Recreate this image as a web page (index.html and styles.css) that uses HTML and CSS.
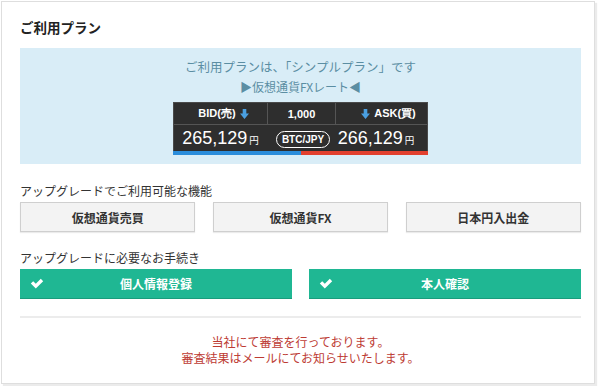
FILE: index.html
```html
<!DOCTYPE html>
<html lang="ja">
<head>
<meta charset="utf-8">
<link rel="stylesheet" href="styles.css">
</head>
<body>
<div class="card">
  <h2 class="title">ご利用プラン</h2>
  <div class="plan-box">
    <p class="plan-text">ご利用プランは、「シンプルプラン」です</p>
    <p class="plan-sub">▶仮想通貨FXレート◀</p>
    <div class="rate">
      <div class="rate-head">
        <div class="cell">BID(売)<svg class="arrow" viewBox="0 0 10 11" width="9" height="10"><path d="M3 0h4v5h3L5 11 0 5h3z" fill="#4a9fe0"/></svg></div>
        <div class="cell">1,000</div>
        <div class="cell"><svg class="arrow" viewBox="0 0 10 11" width="9" height="10"><path d="M3 0h4v5h3L5 11 0 5h3z" fill="#4a9fe0"/></svg>ASK(買)</div>
      </div>
      <div class="rate-body">
        <div class="val">265,129<span class="yen">円</span></div>
        <div class="mid"><span class="pill">BTC/JPY</span></div>
        <div class="val val-ask">266,129<span class="yen">円</span></div>
      </div>
      <div class="rate-bar"><span class="bar-bid"></span><span class="bar-ask"></span></div>
    </div>
  </div>

  <p class="label label-first">アップグレードでご利用可能な機能</p>
  <div class="features">
    <div class="feature">仮想通貨売買</div>
    <div class="feature">仮想通貨FX</div>
    <div class="feature">日本円入出金</div>
  </div>

  <p class="label">アップグレードに必要なお手続き</p>
  <div class="steps">
    <div class="step"><svg class="check" viewBox="0 0 14 11" width="14" height="11"><path d="M0.8 5.6l2.4-2.4 2.6 2.6L10.8 0.8 13.2 3.2 5.8 10.6z" fill="#fff"/></svg>個人情報登録</div>
    <div class="step"><svg class="check" viewBox="0 0 14 11" width="14" height="11"><path d="M0.8 5.6l2.4-2.4 2.6 2.6L10.8 0.8 13.2 3.2 5.8 10.6z" fill="#fff"/></svg>本人確認</div>
  </div>

  <hr class="rule">
  <p class="notice">当社にて審査を行っております。<br>審査結果はメールにてお知らせいたします。</p>
</div>
</body>
</html>
```

FILE: styles.css
```css
* { box-sizing: border-box; }
html, body { margin: 0; padding: 0; background: #fff; }
body {
  font-family: "Noto Sans CJK JP", "Noto Sans", sans-serif;
  color: #333;
  width: 600px;
  height: 386px;
  overflow: hidden;
}
.card {
  margin: 1px 0 0 1px;
  width: 594px;
  height: 383px;
  border: 1px solid #dedede;
  box-shadow: 2px 2px 1px #ebebeb;
  padding: 15px 13px 0 18px;
  background: #fff;
}
.title {
  margin: 0;
  font-size: 13.5px;
  line-height: 20px;
  font-weight: 700;
  color: #222;
}
.plan-box {
  margin-top: 11px;
  background: #d9edf7;
  padding: 9px 0 9px;
  text-align: center;
}
.plan-text, .plan-sub {
  margin: 0;
  font-size: 12px;
  line-height: 20px;
  color: #5b8ea3;
}
.plan-text { font-size: 12.5px; }
.rate {
  width: 255px;
  margin: 5px auto 0;
  background: #2e2e2e;
  border: 1px solid #4a4a4a;
  border-bottom: 0;
  color: #fff;
}
.rate-head, .rate-body {
  display: grid;
  grid-template-columns: 93px 68px 1fr;
}
.rate-head .cell {
  height: 22px;
  display: flex;
  align-items: center;
  justify-content: center;
  gap: 4px;
  font-family: "Liberation Sans", sans-serif;
  font-weight: 700;
  font-size: 11px;
  border-bottom: 1px solid #555;
}
.rate-head .cell + .cell { border-left: 1px solid #555; }
.rate-head .cell:first-child { padding-left: 6px; }
.rate-head .cell:last-child { padding-left: 14px; }
.arrow { display: block; }
.rate-body { height: 26px; align-items: center; }
.val {
  font-family: "Liberation Sans", sans-serif;
  font-size: 18px;
  text-align: center;
  line-height: 26px;
  white-space: nowrap;
}
.val-ask { padding-right: 10px; }
.yen {
  font-family: "Noto Sans CJK JP", sans-serif;
  font-size: 9.5px;
  margin-left: 2px;
}
.mid { display: flex; justify-content: center; padding-left: 4px; }
.pill {
  display: inline-block;
  border: 1.5px solid #fff;
  border-radius: 9px;
  font-family: "Liberation Sans", sans-serif;
  font-weight: 700;
  font-size: 10px;
  line-height: 15px;
  padding: 0 5px;
  white-space: nowrap;
}
.rate-bar { display: flex; height: 4px; margin: 0 -1px; }
.bar-bid { flex: 0 0 128px; background: #2b8ddb; }
.bar-ask { flex: 1; background: #e2402f; }

.label {
  margin: 17px 0 2px;
  font-size: 12px;
  line-height: 18px;
  color: #333;
}
.label-first { margin-top: 18px; }
.features {
  display: grid;
  grid-template-columns: repeat(3, 1fr);
  gap: 17.5px;
}
.feature {
  height: 30px;
  background: #f3f3f3;
  border: 1px solid #cfcfcf;
  box-shadow: 0 1px 1px rgba(0,0,0,0.08);
  display: flex;
  align-items: center;
  justify-content: center;
  font-size: 12px;
  font-weight: 700;
  color: #333;
}
.steps {
  display: grid;
  grid-template-columns: 1fr 1fr;
  gap: 17px;
}
.step {
  position: relative;
  height: 30px;
  background: #1fb793;
  border-bottom: 1px solid #199c7c;
  display: flex;
  align-items: center;
  justify-content: center;
  font-size: 12px;
  font-weight: 700;
  color: #fff;
}
.check { position: absolute; left: 10px; top: 9px; }
.rule {
  margin: 17px 0 0;
  border: 0;
  border-top: 2px solid #ececec;
  height: 0;
}
.notice {
  margin: 16px 0 0;
  text-align: center;
  font-size: 12px;
  line-height: 16px;
  color: #bd3b33;
}
```
